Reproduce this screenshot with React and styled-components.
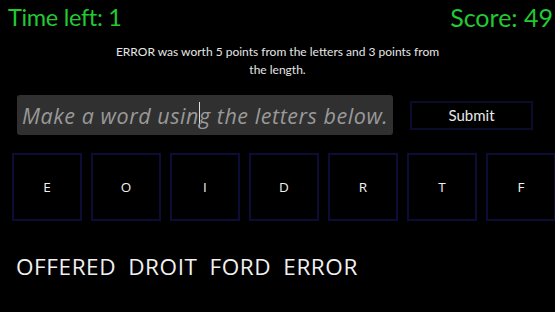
import React from "react";
import styled, { createGlobalStyle } from "styled-components";

const Global = createGlobalStyle`
  html, body { margin: 0; padding: 0; background: #000; }
  body { width: 555px; height: 312px; overflow: hidden; font-family: "Open Sans", "Liberation Sans", sans-serif; }
`;

const Page = styled.div`
  width: 555px;
  height: 312px;
  background: #000;
  overflow: hidden;
  display: flex;
  flex-direction: column;
`;

const Header = styled.div`
  display: flex;
  justify-content: space-between;
  align-items: flex-start;
  padding: 1px 2px 0 8px;
  height: 34px;
`;

const Stat = styled.div`
  color: #22c933;
  font-family: "Lato", "Liberation Sans", sans-serif;
  font-size: ${(p) => (p.$narrow ? "23.5px" : "25px")};
  line-height: 32px;
  letter-spacing: ${(p) => (p.$narrow ? "-0.3px" : "0")};
`;

const Info = styled.div`
  align-self: center;
  width: 334px;
  text-align: center;
  color: #e6e6e6;
  font-family: "Lato", "Liberation Sans", sans-serif;
  font-size: 12px;
  line-height: 18px;
  margin-top: 8px;
`;

const Form = styled.div`
  display: flex;
  align-items: center;
  margin-top: 16px;
  padding-left: 17px;
  gap: 17px;
`;

const WordInput = styled.div`
  width: 376px;
  height: 40px;
  box-sizing: border-box;
  background: #303030;
  border-radius: 3px;
  display: flex;
  align-items: center;
  padding-left: 5px;
  font-family: "Open Sans", "Liberation Sans", sans-serif;
  font-style: italic;
  font-size: 21.5px;
  letter-spacing: 0.55px;
  color: #999;
  white-space: pre;
`;

const Caret = styled.span`
  display: inline-block;
  width: 1px;
  height: 26px;
  background: #ddd;
  margin: 0 -1px 0 0;
`;

const SubmitButton = styled.div`
  width: 123px;
  height: 29px;
  box-sizing: border-box;
  border: 2px solid #0b0b2e;
  display: flex;
  align-items: center;
  justify-content: center;
  color: #e8e8e8;
  font-family: "Lato", "Liberation Sans", sans-serif;
  font-size: 15px;
`;

const Tiles = styled.div`
  display: flex;
  gap: 9px;
  margin-top: 18px;
  padding-left: 12px;
`;

const Tile = styled.div`
  flex: 0 0 70px;
  height: 68px;
  box-sizing: border-box;
  border: 2px solid #0c0c36;
  display: flex;
  align-items: center;
  justify-content: center;
  color: #f2f2f2;
  font-family: "Open Sans", "Liberation Sans", sans-serif;
  font-size: 13.5px;
`;

const Words = styled.div`
  display: flex;
  gap: 12px;
  margin-top: 30px;
  padding-left: 16px;
  color: #f0f0f0;
  font-family: "Open Sans", "Liberation Sans", sans-serif;
  font-size: 22.5px;
  letter-spacing: 0.6px;
`;

const letters = ["E", "O", "I", "D", "R", "T", "F"];
const words = ["OFFERED", "DROIT", "FORD", "ERROR"];

export default function App() {
  return (
    <Page>
      <Global />
      <Header>
        <Stat $narrow>Time left: 1</Stat>
        <Stat>Score: 49</Stat>
      </Header>
      <Info>ERROR was worth 5 points from the letters and 3 points from the length.</Info>
      <Form>
        <WordInput>
          <span>Make a word usin</span>
          <Caret />
          <span>g the letters below.</span>
        </WordInput>
        <SubmitButton>Submit</SubmitButton>
      </Form>
      <Tiles>
        {letters.map((l, i) => (
          <Tile key={i}>{l}</Tile>
        ))}
      </Tiles>
      <Words>
        {words.map((w, i) => (
          <span key={i}>{w}</span>
        ))}
      </Words>
    </Page>
  );
}
